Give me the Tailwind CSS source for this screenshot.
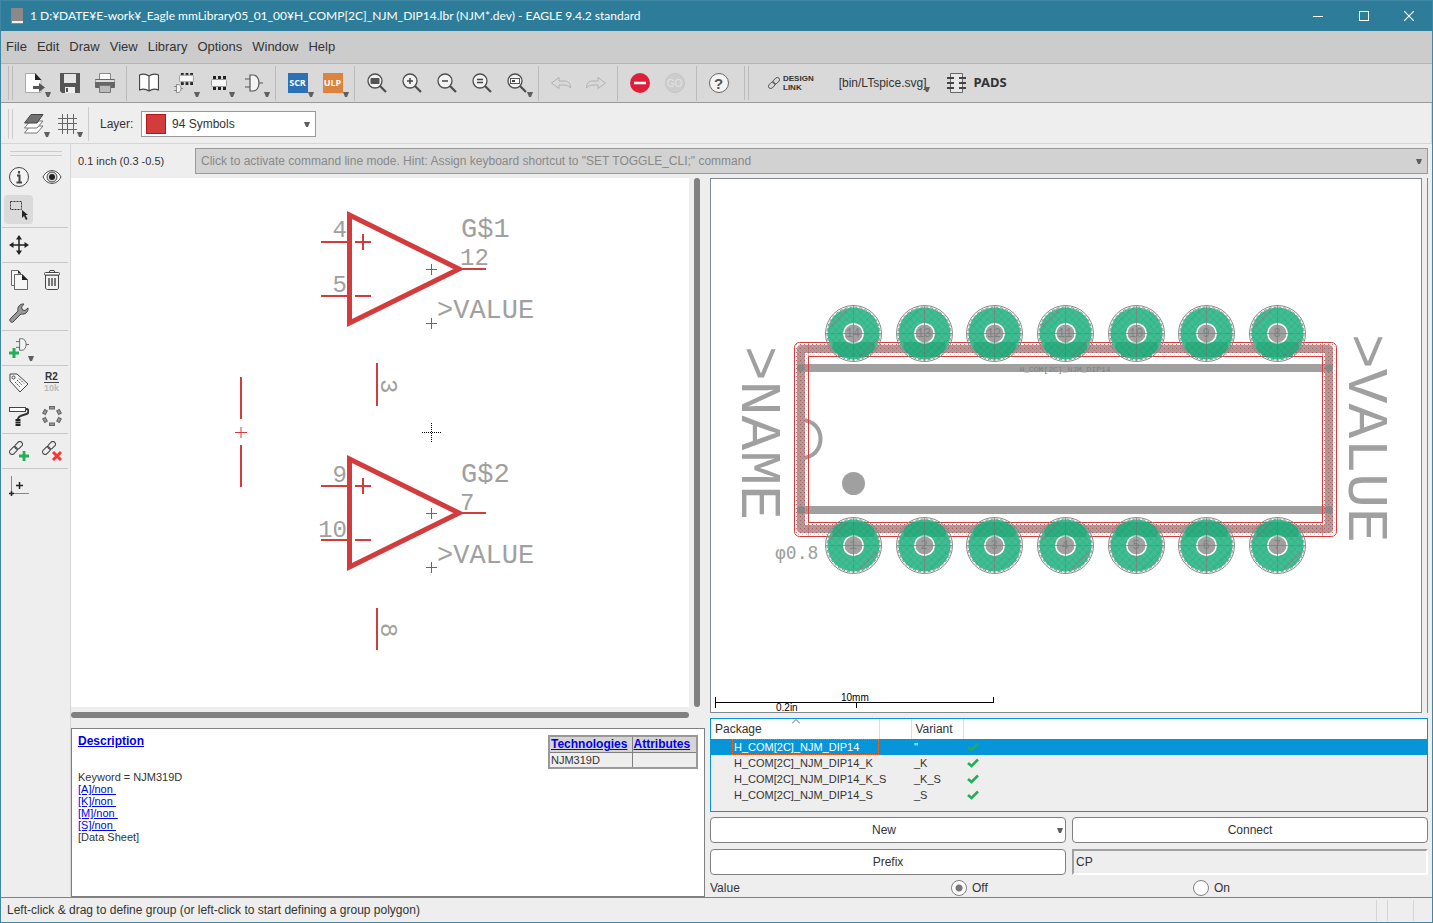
<!DOCTYPE html>
<html lang="en">
<head>
    <meta charset="UTF-8">
    <meta name="viewport" content="width=device-width, initial-scale=1.0">
    <title>EAGLE 9.4.2 standard</title>
    <script src="https://cdn.jsdelivr.net/npm/@tailwindcss/browser@4"></script>
</head>
<body class="h-screen flex flex-col overflow-hidden border border-[#3f87a3] bg-[#eeeeee] font-['Liberation_Sans',sans-serif] text-[11px] text-[#333333]">
    <!-- shared shapes -->
    <svg class="hidden">
        <symbol id="arrow" viewBox="0 0 6 5"><path d="M0 0H6L4 5H2Z" fill="#5f5f5f"/></symbol>
        <symbol id="lens" viewBox="0 0 20 20"><path d="M13 13L19 19" stroke="#4d4d4d" stroke-width="2.2"/><circle cx="8" cy="8" r="7" fill="#f2f2f2" stroke="#4d4d4d" stroke-width="1.3"/></symbol>
        <symbol id="chip" viewBox="0 0 16 14"><path d="M2 2H5M7 2H10M12 2H15M2 12H5M7 12H10M12 12H15" stroke="#222" stroke-width="4"/><rect x="0.500" y="3.500" width="15" height="7" rx="1" fill="#f7f7f7" stroke="#999"/></symbol>
        <symbol id="gate" viewBox="0 0 18 18"><path d="M5 1H8C12 1 14 5 14 9C14 13 12 17 8 17H5ZM0 5H5M0 13H5M14 9H18" fill="#f4f4f4" stroke="#555" stroke-width="1.2"/></symbol>
        <symbol id="links" viewBox="0 0 16 16"><g fill="none" stroke="#444" stroke-width="1.2"><rect x="6" y="2" width="10" height="6" rx="3" transform="rotate(-45 11 5)"/><rect x="0" y="8" width="10" height="6" rx="3" transform="rotate(-45 5 11)"/></g></symbol>
        <symbol id="check" viewBox="0 0 12 10"><path d="M1 5L4.500 8L11 1.500" fill="none" stroke="#25ad57" stroke-width="2.600"/></symbol>
    </svg>

    <!-- title bar -->
    <header class="h-[30px] shrink-0 flex items-center bg-[#2d7d9a] text-white font-[Lato,sans-serif] text-[12px]">
        <svg class="ml-[10px] w-3 h-4" viewBox="0 0 12 16"><rect width="12" height="16" rx="1" fill="#8c8888"/><rect x="1" y="13" width="11" height="2" fill="#eee"/></svg>
        <h1 class="ml-[7px] whitespace-nowrap">1 D:¥DATE¥E-work¥_Eagle mmLibrary05_01_00¥H_COMP[2C]_NJM_DIP14.lbr (NJM*.dev) - EAGLE 9.4.2 standard</h1>
        <div class="ml-auto flex h-full">
            <button aria-label="Minimize" class="w-[46px] grid place-items-center"><svg class="w-[10px] h-[10px]"><path d="M0 5.500H10" stroke="#fff"/></svg></button>
            <button aria-label="Maximize" class="w-[45px] grid place-items-center"><svg class="w-[10px] h-[10px]"><rect x="0.500" y="0.500" width="9" height="9" fill="none" stroke="#fff"/></svg></button>
            <button aria-label="Close" class="w-[46px] grid place-items-center"><svg class="w-[10px] h-[10px]"><path d="M0 0L10 10M10 0L0 10" stroke="#fff" stroke-width="1.2"/></svg></button>
        </div>
    </header>

    <!-- menu -->
    <nav class="h-[33px] shrink-0 flex items-center gap-[10px] pl-[5px] bg-[#cccccc] border-b border-[#b5b5b5] text-[13px]">
        <a href="#">File</a><a href="#">Edit</a><a href="#">Draw</a><a href="#">View</a><a href="#">Library</a><a href="#">Options</a><a href="#">Window</a><a href="#">Help</a>
    </nav>

    <!-- main toolbar -->
    <div class="h-[39px] shrink-0 flex items-center bg-[#d9d9d9] border-b border-[#999999]">
        <div class="ml-[7px] mr-[4px] w-[5px] h-[34px] border-x border-[#bbbbbb]"></div>
        <button aria-label="Open" class="relative w-[35px] h-[35px] grid place-items-center">
            <svg class="w-5 h-5" viewBox="0 0 20 20"><path d="M0.500 0.500H10L16 7V19.500H0.500Z" fill="#fff" stroke="#aaa"/><path d="M10 0L16.500 7H10Z" fill="#222"/><path d="M8 14.500H15" stroke="#555" stroke-width="3"/><path d="M14 10L20 14.500L14 19Z" fill="#555"/></svg>
            <svg class="absolute left-[28px] top-[26px] w-[6px] h-[5px]"><use href="#arrow"/></svg>
        </button>
        <button aria-label="Save" class="w-[35px] h-[35px] grid place-items-center">
            <svg class="w-5 h-5" viewBox="0 0 20 20"><path d="M0 0H20V20H2L0 18Z" fill="#555"/><rect x="4" y="1" width="12" height="9" fill="#e5e5e5"/><rect x="5" y="14" width="10" height="6" fill="#eee"/><rect x="6" y="15" width="2" height="4" fill="#555"/></svg>
        </button>
        <button aria-label="Print" class="w-[35px] h-[35px] grid place-items-center">
            <svg class="w-5 h-5" viewBox="0 0 20 20"><path d="M4.500 6V0.500H15.500V6" fill="#fff" stroke="#888"/><rect x="0" y="6" width="20" height="9" rx="1" fill="#666"/><rect x="0.500" y="7" width="19" height="2" fill="#ddd"/><path d="M4.500 12.500H15.500V19.500H4.500Z" fill="#bbb" stroke="#777"/></svg>
        </button>
        <div class="mx-1 w-px h-[35px] bg-[#bbbbbb]"></div>
        <button aria-label="Library" class="w-[35px] h-[35px] grid place-items-center">
            <svg class="w-5 h-5" viewBox="0 0 20 20"><path d="M10 3C7 1 3 1 0.500 2V17C3 16 7 16 10 18C13 16 17 16 19.500 17V2C17 1 13 1 10 3V18" fill="#fff" stroke="#444" stroke-width="1.2"/></svg>
        </button>
        <button aria-label="Device" class="relative w-[35px] h-[35px] grid place-items-center">
            <svg class="w-5 h-5" viewBox="0 0 20 20"><use href="#chip" x="5" y="-1" width="15" height="13"/><use href="#gate" x="0" y="11" width="9" height="9"/></svg>
            <svg class="absolute left-[28px] top-[26px] w-[6px] h-[5px]"><use href="#arrow"/></svg>
        </button>
        <button aria-label="Package" class="relative w-[35px] h-[35px] grid place-items-center">
            <svg class="w-4 h-[14px]"><use href="#chip"/></svg>
            <svg class="absolute left-[28px] top-[26px] w-[6px] h-[5px]"><use href="#arrow"/></svg>
        </button>
        <button aria-label="Symbol" class="relative w-[35px] h-[35px] grid place-items-center">
            <svg class="w-[18px] h-[18px]"><use href="#gate"/></svg>
            <svg class="absolute left-[28px] top-[26px] w-[6px] h-[5px]"><use href="#arrow"/></svg>
        </button>
        <div class="mx-1 w-px h-[35px] bg-[#bbbbbb]"></div>
        <button class="relative w-[35px] h-[35px] grid place-items-center">
            <span class="w-5 h-5 grid place-items-center bg-[#2a71b8] text-white font-['Open_Sans',sans-serif] font-bold text-[9px]">SCR</span>
            <svg class="absolute left-[28px] top-[26px] w-[6px] h-[5px]"><use href="#arrow"/></svg>
        </button>
        <button class="relative w-[35px] h-[35px] grid place-items-center">
            <span class="w-5 h-5 grid place-items-center bg-[#db833f] text-white font-['Open_Sans',sans-serif] font-bold text-[9px]">ULP</span>
            <svg class="absolute left-[28px] top-[26px] w-[6px] h-[5px]"><use href="#arrow"/></svg>
        </button>
        <div class="mx-1 w-px h-[35px] bg-[#bbbbbb]"></div>
        <button aria-label="Fit" class="w-[35px] h-[35px] grid place-items-center"><svg class="w-5 h-5" viewBox="0 0 20 20"><use href="#lens"/><rect x="3.500" y="5" width="9" height="6" rx="1" fill="#555"/></svg></button>
        <button aria-label="Zoom in" class="w-[35px] h-[35px] grid place-items-center"><svg class="w-5 h-5" viewBox="0 0 20 20"><use href="#lens"/><path d="M5 8H11M8 5V11" stroke="#444" stroke-width="1.5"/></svg></button>
        <button aria-label="Zoom out" class="w-[35px] h-[35px] grid place-items-center"><svg class="w-5 h-5" viewBox="0 0 20 20"><use href="#lens"/><path d="M5 8H11" stroke="#444" stroke-width="1.5"/></svg></button>
        <button aria-label="Redraw" class="w-[35px] h-[35px] grid place-items-center"><svg class="w-5 h-5" viewBox="0 0 20 20"><use href="#lens"/><path d="M5 6.500H11M5 9.500H11" stroke="#444" stroke-width="1.3"/></svg></button>
        <button aria-label="Zoom select" class="relative w-[35px] h-[35px] grid place-items-center"><svg class="w-5 h-5" viewBox="0 0 20 20"><use href="#lens"/><rect x="3.500" y="5.500" width="9" height="5" fill="#fff" stroke="#555"/><rect x="5" y="7" width="3" height="2" fill="#444"/></svg>
            <svg class="absolute left-[28px] top-[26px] w-[6px] h-[5px]"><use href="#arrow"/></svg></button>
        <div class="mx-1 w-px h-[35px] bg-[#bbbbbb]"></div>
        <button aria-label="Undo" class="w-[35px] h-[35px] grid place-items-center"><svg class="w-5 h-5" viewBox="0 0 20 20"><path d="M0.500 10L8 4.500V8H13C17 8 19.500 10 19.500 15C17 12 15 12 8 12V15.500Z" fill="none" stroke="#b0b0b0"/></svg></button>
        <button aria-label="Redo" class="w-[35px] h-[35px] grid place-items-center"><svg class="w-5 h-5" viewBox="0 0 20 20"><path d="M19.500 10L12 4.500V8H7C3 8 0.500 10 0.500 15C3 12 5 12 12 12V15.500Z" fill="none" stroke="#b0b0b0"/></svg></button>
        <div class="mx-1 w-px h-[35px] bg-[#bbbbbb]"></div>
        <button aria-label="Stop" class="w-[35px] h-[35px] grid place-items-center"><svg class="w-5 h-5"><circle cx="10" cy="10" r="10" fill="#df1f3a"/><path d="M4 10H16" stroke="#fff" stroke-width="2.500"/></svg></button>
        <button class="w-[35px] h-[35px] grid place-items-center"><span class="w-5 h-5 grid place-items-center rounded-full bg-[#cdcdcd] border border-[#c4c4c4] text-[#e2e2e2] text-[10px]">GO</span></button>
        <div class="mx-1 w-px h-[35px] bg-[#bbbbbb]"></div>
        <button class="w-[35px] h-[35px] grid place-items-center"><span class="w-5 h-5 grid place-items-center rounded-full bg-[#f4f4f4] border border-[#666666] text-[#555555] font-bold text-[15px] leading-none">?</span></button>
        <div class="ml-[8px] mr-[19px] w-[5px] h-[34px] border-x border-[#bbbbbb]"></div>
        <button class="flex items-center gap-[3px] font-bold text-[8px] leading-[9px] text-left">
            <svg class="w-[12px] h-[12px]"><use href="#links"/></svg><span>DESIGN<br>LINK</span>
        </button>
        <button class="relative ml-[25px] text-[12px] whitespace-nowrap">[bin/LTspice.svg]<svg class="absolute -right-[3px] bottom-0 w-[6px] h-[5px]"><use href="#arrow"/></svg></button>
        <button class="ml-[20px] flex items-center gap-2 font-['Noto_Sans',sans-serif] font-bold text-[13px]">
            <svg class="w-[19px] h-5" viewBox="0 0 19 20"><path d="M3.500 0.500H15.500V19.500H3.500Z" fill="#e8e8e8" stroke="#666"/><path d="M0 5H7M0 10H7M0 15H7M12 5H19M12 10H19M12 15H19" stroke="#444" stroke-width="2"/></svg>PADS
        </button>
    </div>

    <!-- layer toolbar -->
    <div class="h-[41px] shrink-0 flex items-center pt-[2px] bg-[#eeeeee] border-b border-r border-[#d5d5d5]">
        <div class="ml-[7px] mr-[4px] w-[5px] h-[30px] border-x border-[#cccccc]"></div>
        <button aria-label="Layer settings" class="relative w-[34px] h-[34px] grid place-items-center">
            <svg class="w-5 h-5" viewBox="0 0 20 20"><path d="M0.500 19L6 12H19L13 19Z" fill="#fff" stroke="#777"/><path d="M0.500 14L6 7H19L13 14Z" fill="#fff" stroke="#777"/><path d="M0.500 9L7 0.500H19L13 9Z" fill="#707070" stroke="#444"/></svg>
            <svg class="absolute left-[27px] top-[25px] w-[6px] h-[5px]"><use href="#arrow"/></svg>
        </button>
        <button aria-label="Grid" class="relative w-[33px] h-[34px] grid place-items-center">
            <svg class="w-5 h-5" viewBox="0 0 20 20"><path d="M0 4.500H19M0 9.500H19M0 15.500H19M4.500 0V20M9.500 0V20M15.500 0V20" stroke="#666"/></svg>
            <svg class="absolute left-[26px] top-[25px] w-[6px] h-[5px]"><use href="#arrow"/></svg>
        </button>
        <div class="ml-[4px] mr-[11px] w-px h-[34px] bg-[#cccccc]"></div>
        <label for="layer" class="w-[41px] text-[12px]">Layer:</label>
        <div class="relative w-[175px]">
            <select id="layer" class="appearance-none w-full h-[26px] pl-[30px] bg-white border border-[#999999] text-[12px]"><option>94 Symbols</option></select>
            <span class="absolute left-[5px] top-[3px] w-5 h-5 bg-[#d23c3c] border border-[#bb1616]"></span>
            <svg class="absolute right-[6px] top-[11px] w-[6px] h-[5px]"><use href="#arrow"/></svg>
        </div>
    </div>

    <div class="flex-1 min-h-0 flex">
        <!-- tools -->
        <aside class="w-[70px] shrink-0 border-r border-[#d5d5d5] pl-px pr-[2px]">
            <div class="mt-[7px] mb-[4px] ml-[8px] w-[52px] h-[5px] border-y border-[#cccccc]"></div>
            <div class="grid grid-cols-[33px_33px] auto-rows-[33px] place-items-center">
                <button aria-label="Info"><svg class="w-5 h-5"><circle cx="10" cy="10" r="9.500" fill="#f3f3f3" stroke="#444"/><path d="M8 8.500H10.500V15M7.500 15.500H13M10 4V6.500" fill="none" stroke="#444" stroke-width="2"/></svg></button>
                <button aria-label="Show"><svg class="w-5 h-5"><path d="M1 10C5 1.500 15 1.500 19 10C15 18.500 5 18.500 1 10Z" fill="#fff" stroke="#444"/><circle cx="10" cy="10" r="5" fill="#ddd" stroke="#444"/><circle cx="10" cy="10" r="3" fill="#222"/></svg></button>
                <button aria-label="Group" class="w-[29px] h-[29px] bg-[#dadada] rounded-sm grid place-items-center"><svg class="w-5 h-5"><rect x="1.500" y="1.500" width="11" height="8" fill="none" stroke="#333" stroke-dasharray="2 1"/><path d="M13 10V18L15 16L17 20L18.500 19L16.500 15H19Z" fill="#222"/></svg></button>
            </div>
            <div class="mt-px border-t border-[#c8c8c8] grid grid-cols-[33px_33px] auto-rows-[33px] place-items-center">
                <button aria-label="Move"><svg class="w-5 h-5"><path d="M10 3V17M3 10H17" stroke="#222" stroke-width="1.500"/><path d="M10 0L13 4.500H7ZM10 20L7 15.500H13ZM0 10L4.500 7V13ZM20 10L15.500 13V7Z" fill="#222"/></svg></button>
            </div>
            <div class="mt-px border-t border-[#c8c8c8] grid grid-cols-[33px_33px] auto-rows-[33px] place-items-center">
                <button aria-label="Copy"><svg class="w-5 h-5"><path d="M2.500 0.500H9L11.500 3V15.500H2.500Z" fill="#f6f6f6" stroke="#666"/><path d="M5.500 4.500H13L18.500 10V19.500H5.500Z" fill="#f6f6f6" stroke="#666"/><path d="M13 4L19 10H13ZM9 0L12 3.500H9Z" fill="#222"/></svg></button>
                <button aria-label="Delete"><svg class="w-5 h-5"><path d="M4 5H16.500V17C16.500 19 16 19.500 15 19.500H5.500C4.500 19.500 3.500 19 3.500 17V5" fill="#f2f2f2" stroke="#444"/><rect x="2.500" y="2.500" width="15" height="2.500" rx="1" fill="#fff" stroke="#444"/><path d="M7 2.500L8 0.500H12L13 2.500" fill="none" stroke="#444"/><path d="M7 8V16M10 8V16M13 8V16" stroke="#333" stroke-width="1.300"/></svg></button>
                <button aria-label="Change"><svg class="w-5 h-5"><path d="M1 16L9 8C8 4 11 0.500 15 1L12.500 4L13.500 7L16 7.500L19 5C19.500 9 16 12 12 11L4 19C2 20 0 18 1 16Z" fill="#999" stroke="#444"/></svg></button>
            </div>
            <div class="mt-px border-t border-[#c8c8c8] grid grid-cols-[33px_33px] auto-rows-[33px] place-items-center">
                <button aria-label="Add" class="relative"><svg class="w-5 h-5"><use href="#gate" x="7" y="0" width="13" height="13"/><path d="M5 10V20M0 15H10" stroke="#25ad57" stroke-width="3"/></svg><svg class="absolute left-[19px] top-[18px] w-[6px] h-[5px]"><use href="#arrow"/></svg></button>
            </div>
            <div class="mt-px border-t border-[#c8c8c8] grid grid-cols-[33px_33px] auto-rows-[33px] place-items-center">
                <button aria-label="Name"><svg class="w-5 h-5"><path d="M1 1H8L19 11L11 19L1 8Z" fill="#f6f6f6" stroke="#444"/><circle cx="4.500" cy="4.500" r="1.500" fill="#fff" stroke="#444"/><path d="M6 9L11 14M8 7L13 12M10 5.500L15 10.500" stroke="#555" stroke-dasharray="2 1"/></svg></button>
                <button class="grid text-[10px] leading-[10px] font-bold"><span class="border-b border-[#444444]">R2</span><span class="text-[#bbbbbb] text-[9px]">10k</span></button>
                <button aria-label="Paint"><svg class="w-5 h-5"><rect x="0.500" y="1.500" width="16" height="4" fill="#fff" stroke="#444"/><path d="M17 3C20 3 19.500 5 19 7C18 9 9 9 9 13" fill="none" stroke="#333" stroke-width="2"/><path d="M9 13V20" stroke="#222" stroke-width="5" stroke-dasharray="2 0.500"/></svg></button>
                <button aria-label="Pin swap"><svg class="w-5 h-5"><g fill="#999" stroke="#666"><rect x="7.500" y="0.500" width="5" height="2.500"/><rect x="7.500" y="17" width="5" height="2.500"/><rect x="1.500" y="4" width="3" height="4" transform="rotate(30 3 6)"/><rect x="15.500" y="4" width="3" height="4" transform="rotate(-30 17 6)"/><rect x="1.500" y="12" width="3" height="4" transform="rotate(-30 3 14)"/><rect x="15.500" y="12" width="3" height="4" transform="rotate(30 17 14)"/></g></svg></button>
            </div>
            <div class="mt-px border-t border-[#c8c8c8] grid grid-cols-[33px_33px] auto-rows-[33px] place-items-center">
                <button aria-label="Add link"><svg class="w-5 h-5"><use href="#links" x="0" y="0" width="14" height="14"/><path d="M15 10V20M10 15H20" stroke="#25ad57" stroke-width="2.800"/></svg></button>
                <button aria-label="Remove link"><svg class="w-5 h-5"><use href="#links" x="0" y="0" width="14" height="14"/><path d="M11 11L19 19M19 11L11 19" stroke="#fb3535" stroke-width="3"/></svg></button>
            </div>
            <div class="mt-px border-t border-[#c8c8c8] grid grid-cols-[33px_33px] auto-rows-[33px] place-items-center">
                <button aria-label="Mark"><svg class="w-5 h-5"><path d="M2.500 0V18M2 17.500H20" stroke="#888"/><path d="M7 9.500H14M10.500 6V13M0 17.500H5M2.500 15V20" stroke="#222" stroke-width="1.500"/></svg></button>
            </div>
        </aside>

        <main class="flex-1 min-w-0 flex flex-col">
            <div class="h-[34px] shrink-0 flex items-center pl-[7px] pr-[4px]">
                <span class="w-[117px] shrink-0 whitespace-nowrap">0.1 inch (0.3 -0.5)</span>
                <div class="relative flex-1">
                    <input aria-label="Command line" placeholder='Click to activate command line mode. Hint: Assign keyboard shortcut to "SET TOGGLE_CLI;" command' class="block w-full h-[26px] px-[5px] bg-[#d2d2d2] border border-[#999999] text-[12px] placeholder:text-[#888888]">
                    <svg class="absolute right-[6px] top-[11px] w-[6px] h-[5px]"><use href="#arrow"/></svg>
                </div>
            </div>

            <div class="flex-1 min-h-0 grid grid-cols-[minmax(0,634fr)_minmax(0,718fr)] gap-[5px] pr-[4px]">
                <!-- symbol view and description -->
                <section class="flex flex-col min-h-0">
                    <div class="flex-1 min-h-0 flex">
                        <div class="flex-1 min-w-0 flex flex-col">
                            <svg class="flex-1 min-h-0 w-full bg-white" viewBox="71 178 618 529">
                                <g fill="none" stroke="#d23c3c" stroke-width="2">
                                    <g id="opamp">
                                        <path d="M349.500 215V323L459 269Z" stroke-width="5"/>
                                        <path d="M321 242H347M321 296H347M355 242H371M363 234V250M355 296H371M460 269H486"/>
                                        <path d="M426 269.500H437M431.500 264V275M426 323.500H437M431.500 318V329" stroke-width="1"/>
                                    </g>
                                    <use href="#opamp" y="244"/>
                                    <path d="M377 363V406M377 608V650M241 377V419M241 445V487"/>
                                    <path d="M235 432.500H247M241 427V438" stroke-width="1"/>
                                </g>
                                <path d="M422 432.500H441M431.500 423V442" stroke="#000" stroke-dasharray="1 1"/>
                                <g fill="#a0a0a0" font-family="Liberation Mono" font-size="27">
                                    <text x="461" y="237">G$1</text>
                                    <text x="437" y="318">&gt;VALUE</text>
                                    <text x="461" y="482">G$2</text>
                                    <text x="437" y="563">&gt;VALUE</text>
                                    <g font-size="24">
                                        <text x="347" y="237" text-anchor="end">4</text>
                                        <text x="347" y="292" text-anchor="end">5</text>
                                        <text x="460" y="265">12</text>
                                        <text x="347" y="482" text-anchor="end">9</text>
                                        <text x="347" y="537" text-anchor="end">10</text>
                                        <text x="460" y="510">7</text>
                                        <text transform="translate(381 379) rotate(90)">3</text>
                                        <text transform="translate(381 623) rotate(90)">8</text>
                                    </g>
                                </g>
                            </svg>
                            <div class="mt-[5px] h-[6px] shrink-0 rounded-sm bg-[#808080]"></div>
                        </div>
                        <div class="mx-[5px] mb-[11px] w-[6px] rounded-sm bg-[#808080]"></div>
                    </div>
                    <div class="mt-[10px] h-[169px] shrink-0 flex justify-between bg-white border border-[#808080] pl-[6px] pr-[6px] pt-[6px] leading-3">
                        <div>
                            <a href="#" class="block mb-6 text-[12px] font-bold text-[#0000ee] underline">Description</a>
                            <p>Keyword = NJM319D</p>
                            <a href="#" class="block whitespace-pre text-[#0000ee] underline">[A]/non </a>
                            <a href="#" class="block whitespace-pre text-[#0000ee] underline">[K]/non </a>
                            <a href="#" class="block whitespace-pre text-[#0000ee] underline">[M]/non </a>
                            <a href="#" class="block whitespace-pre text-[#0000ee] underline">[S]/non </a>
                            <p>[Data Sheet]</p>
                        </div>
                        <table class="w-[150px] table-fixed self-start border-collapse border-2 border-[#999999] text-left">
                            <colgroup><col class="w-[83px]"><col></colgroup>
                            <tr class="h-4 bg-[#d5d5d5] text-[12px]"><th class="border border-[#808080] px-px"><a href="#" class="text-[#0000ee] underline">Technologies</a></th><th class="border border-[#808080] px-px"><a href="#" class="text-[#0000ee] underline">Attributes</a></th></tr>
                            <tr class="h-4 bg-[#eeeeee]"><td class="border border-[#808080] px-px">NJM319D</td><td class="border border-[#808080]"></td></tr>
                        </table>
                    </div>
                </section>

                <!-- package view and variants -->
                <section class="flex flex-col min-h-0">
                    <div class="flex-1 min-h-0 flex border-r border-[#808890]">
                        <svg class="flex-1 min-w-0 mr-[5px] bg-white border border-[#808890]" viewBox="711 179 710 533">
                            <defs>
                                <pattern id="dots" width="4" height="4" patternUnits="userSpaceOnUse"><rect width="1" height="1" fill="#d23c3c" fill-opacity="0.800"/><rect x="2" y="2" width="1" height="1" fill="#d23c3c" fill-opacity="0.350"/></pattern>
                                <pattern id="hatch" width="7" height="7" patternUnits="userSpaceOnUse"><path d="M0 0L7 7M7 0L0 7" stroke="#2a9c76" stroke-opacity="0.600" stroke-width="0.700"/></pattern>
                                <g id="pad">
                                    <circle r="26" fill="#3fbd93"/>
                                    <circle r="26" fill="url(#hatch)"/>
                                    <circle r="10.500" fill="#fff"/>
                                    <circle r="9" fill="#a0a0a0"/>
                                    <circle r="28" fill="none" stroke="#8a8a8a"/>
                                    <circle r="26.500" fill="none" stroke="#8a8a8a" stroke-dasharray="3 2"/>
                                    <path d="M-28 0H28M0 -28V28M-24 -6L-6 -24M6 24L24 6" stroke="#808080" stroke-width="0.800"/>
                                </g>
                            </defs>
                            <g fill="none" stroke="#a0a0a0" stroke-width="8">
                                <rect x="801" y="349" width="528" height="180" stroke-linejoin="round"/>
                                <path d="M801 368H1329M801 510H1329"/>
                                <path d="M801 420C827 420 827 458 801 458" stroke-width="4"/>
                            </g>
                            <circle cx="853.500" cy="483.500" r="11.500" fill="#a0a0a0"/>
                            <path d="M799 342H1332L1337 347V532L1332 537H799L794 532V347ZM809 357V522H1322V357Z" fill="url(#dots)" fill-rule="evenodd"/>
                            <g fill="none" stroke="#d23c3c">
                                <rect x="794.500" y="342.500" width="542" height="194" rx="5"/>
                                <rect x="808.500" y="356.500" width="514" height="166"/>
                                <path d="M808.500 342V536M1322.500 342V536" stroke-opacity="0.400"/>
                            </g>
                            <g fill="#888888"><circle cx="801" cy="368" r="4"/><circle cx="1329" cy="368" r="4"/><circle cx="801" cy="510" r="4"/><circle cx="1329" cy="510" r="4"/></g>
                            <use href="#pad" x="853.500" y="333.500"/><use href="#pad" x="924.500" y="333.500"/><use href="#pad" x="994.500" y="333.500"/><use href="#pad" x="1065.500" y="333.500"/><use href="#pad" x="1136.500" y="333.500"/><use href="#pad" x="1206.500" y="333.500"/><use href="#pad" x="1277.500" y="333.500"/>
                            <use href="#pad" x="853.500" y="545.500"/><use href="#pad" x="924.500" y="545.500"/><use href="#pad" x="994.500" y="545.500"/><use href="#pad" x="1065.500" y="545.500"/><use href="#pad" x="1136.500" y="545.500"/><use href="#pad" x="1206.500" y="545.500"/><use href="#pad" x="1277.500" y="545.500"/>
                            <!-- body strip running under the pads -->
                            <g fill="#0e9060" fill-opacity="0.350">
                                <path id="shade" d="M833 342H874C877 348 872 354 867 357H840C834 354 831 348 833 342Z"/>
                                <use href="#shade" x="71"/><use href="#shade" x="141"/><use href="#shade" x="212"/><use href="#shade" x="283"/><use href="#shade" x="353"/><use href="#shade" x="424"/>
                                <path id="shade2" d="M833 537H874C877 531 872 525 867 522H840C834 525 831 531 833 537Z"/>
                                <use href="#shade2" x="71"/><use href="#shade2" x="141"/><use href="#shade2" x="212"/><use href="#shade2" x="283"/><use href="#shade2" x="353"/><use href="#shade2" x="424"/>
                            </g>
                            <g fill="#808080" font-family="Liberation Mono" font-size="12" text-anchor="middle">
                                <text x="853" y="337">14</text><text x="924" y="337">13</text><text x="994" y="337">12</text><text x="1065" y="337">11</text><text x="1136" y="337">10</text><text x="1206" y="337">9</text><text x="1277" y="337">8</text>
                                <text x="853" y="549">1</text><text x="924" y="549">2</text><text x="994" y="549">3</text><text x="1065" y="549">4</text><text x="1136" y="549">5</text><text x="1206" y="549">6</text><text x="1277" y="549">7</text>
                                <text x="1065" y="372" font-size="8">H_COM[2C]_NJM_DIP14</text>
                            </g>
                            <g fill="#a0a0a0" font-family="Liberation Mono" font-size="58">
                                <text transform="translate(742 346) rotate(90)">&gt;NAME</text>
                                <text transform="translate(1349 334) rotate(90)">&gt;VALUE</text>
                            </g>
                            <text x="775" y="559" fill="#a0a0a0" font-family="DejaVu Sans Mono" font-size="18">φ0.8</text>
                            <path d="M715.500 697V708M715 702.500H994M993.500 697V703M856.500 702V708" stroke="#000"/>
                            <g fill="#000" font-family="Liberation Sans" font-size="10"><text x="841" y="701">10mm</text><text x="776" y="711">0.2in</text></g>
                        </svg>
                    </div>

                    <div class="relative mt-[5px] h-[94px] shrink-0 border border-[#0795da]">
                        <table class="w-full table-fixed border-collapse text-left leading-[14px]">
                            <colgroup><col class="w-[168px]"><col class="w-8"><col class="w-[52px]"><col></colgroup>
                            <tr class="h-5 bg-white text-[12px]"><th class="pl-[4px] p-0 font-normal border-r border-[#dddddd]">Package</th><th class="border-r border-[#dddddd]"></th><th class="pl-[4px] p-0 font-normal border-r border-[#dddddd]">Variant</th><th></th></tr>
                            <tr class="h-4 bg-[#0795da] text-white"><td class="p-0 pl-[21px]"><span class="block pl-px leading-[14px] border border-dotted border-[#f26a22]">H_COM[2C]_NJM_DIP14</span></td><td></td><td class="p-0 pl-[3px]">"</td><td class="p-0 pl-[4px]"><svg class="w-3 h-[10px] opacity-80"><use href="#check"/></svg></td></tr>
                            <tr class="h-4"><td class="p-0 pl-[23px] whitespace-nowrap">H_COM[2C]_NJM_DIP14_K</td><td></td><td class="p-0 pl-[3px]">_K</td><td class="p-0 pl-[4px]"><svg class="w-3 h-[10px]"><use href="#check"/></svg></td></tr>
                            <tr class="h-4"><td class="p-0 pl-[23px] whitespace-nowrap">H_COM[2C]_NJM_DIP14_K_S</td><td></td><td class="p-0 pl-[3px]">_K_S</td><td class="p-0 pl-[4px]"><svg class="w-3 h-[10px]"><use href="#check"/></svg></td></tr>
                            <tr class="h-4"><td class="p-0 pl-[23px] whitespace-nowrap">H_COM[2C]_NJM_DIP14_S</td><td></td><td class="p-0 pl-[3px]">_S</td><td class="p-0 pl-[4px]"><svg class="w-3 h-[10px]"><use href="#check"/></svg></td></tr>
                        </table>
                        <svg class="absolute left-[81px] top-0 w-2 h-[5px]"><path d="M0 4.500L4 0.500L8 4.500" fill="none" stroke="#666"/></svg>
                    </div>
                    <div class="mt-[5px] shrink-0 grid grid-cols-2 gap-[6px] text-[12px]">
                        <button class="relative h-[26px] pr-2 bg-white border border-[#808080] rounded-[4px]">New<svg class="absolute right-[2px] top-[10px] w-[6px] h-[5px]"><use href="#arrow"/></svg></button>
                        <button class="h-[26px] bg-white border border-[#808080] rounded-[4px]">Connect</button>
                        <button class="h-[26px] bg-white border border-[#808080] rounded-[4px]">Prefix</button>
                        <input aria-label="Prefix value" value="CP" class="h-[26px] min-w-0 px-[2px] bg-[#eeeeee] border-2 border-t-[#a0a0a0] border-l-[#a0a0a0] border-b-white border-r-white">
                    </div>
                    <div class="mt-1 h-[18px] shrink-0 grid grid-cols-[241fr_242fr_235fr] items-center text-[12px]">
                        <span>Value</span>
                        <label class="flex items-center gap-[5px]"><input type="radio" name="value" checked class="appearance-none w-4 h-4 rounded-full border border-[#808080] bg-white checked:bg-[radial-gradient(#777_0_3px,#fff_4px)]">Off</label>
                        <label class="flex items-center gap-[5px]"><input type="radio" name="value" class="appearance-none w-4 h-4 rounded-full border border-[#808080] bg-white">On</label>
                    </div>
                </section>
            </div>
        </main>
    </div>

    <footer class="h-[25px] shrink-0 flex items-center border-t border-[#808080] pl-[6px] pr-[18px] text-[12px]">
        <span class="mr-auto">Left-click &amp; drag to define group (or left-click to start defining a group polygon)</span>
        <div class="w-[38px] h-[21px] border-x border-[#d5d5d5] pl-[10px]"><div class="h-full border-l border-[#d5d5d5]"></div></div>
    </footer>
</body>
</html>
